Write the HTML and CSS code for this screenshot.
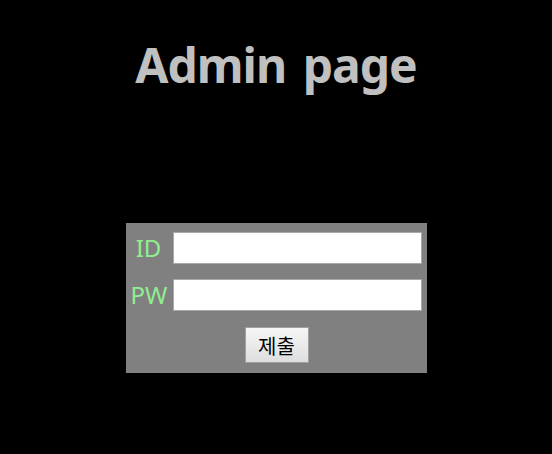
FILE: index.html
```html
<!DOCTYPE html>
<html lang="ko">
<head>
<meta charset="utf-8">
<title>Admin page</title>
<link rel="stylesheet" href="styles.css">
</head>
<body>
<h1 class="title">Admin page</h1>
<form class="login">
  <div class="row">
    <label class="label" for="id">ID</label>
    <input class="field" id="id" type="text">
  </div>
  <div class="row">
    <label class="label" for="pw">PW</label>
    <input class="field" id="pw" type="password">
  </div>
  <div class="actions">
    <button class="submit" type="button">제출</button>
  </div>
</form>
</body>
</html>
```
FILE: styles.css
```css
html, body {
  margin: 0;
  padding: 0;
  background: #000;
  height: 100%;
}
body {
  display: flex;
  flex-direction: column;
  align-items: center;
  font-family: "Noto Sans", "Noto Sans CJK KR", sans-serif;
}
.title {
  margin: 31px 0 0;
  font-size: 48px;
  font-weight: bold;
  color: #c0c0c0;
  line-height: 67px;
  letter-spacing: -1px;
  word-spacing: 5px;
}
.login {
  margin-top: 125px;
  width: 301px;
  box-sizing: border-box;
  background: #808080;
  padding: 9px 5px 10px 5px;
  display: flex;
  flex-direction: column;
}
.row {
  display: flex;
  align-items: center;
  margin-bottom: 15px;
}
.row + .row {
  margin-bottom: 16px;
}
.label {
  width: 36px;
  text-align: center;
  color: #90ee90;
  font-size: 24px;
  line-height: 32px;
  margin-right: 6px;
}
.field {
  flex: 1;
  height: 32px;
  box-sizing: border-box;
  border: 1px solid #a9a9a9;
  background: #fff;
  margin: 0;
}
.actions {
  display: flex;
  justify-content: center;
}
.submit {
  width: 64px;
  height: 36px;
  font-family: "Noto Sans CJK KR", sans-serif;
  font-size: 20px;
  color: #000;
  background: linear-gradient(#f6f6f6, #dedede);
  border: 1px solid #a0a0a0;
  padding: 0;
  margin-left: 1px;
}
```
